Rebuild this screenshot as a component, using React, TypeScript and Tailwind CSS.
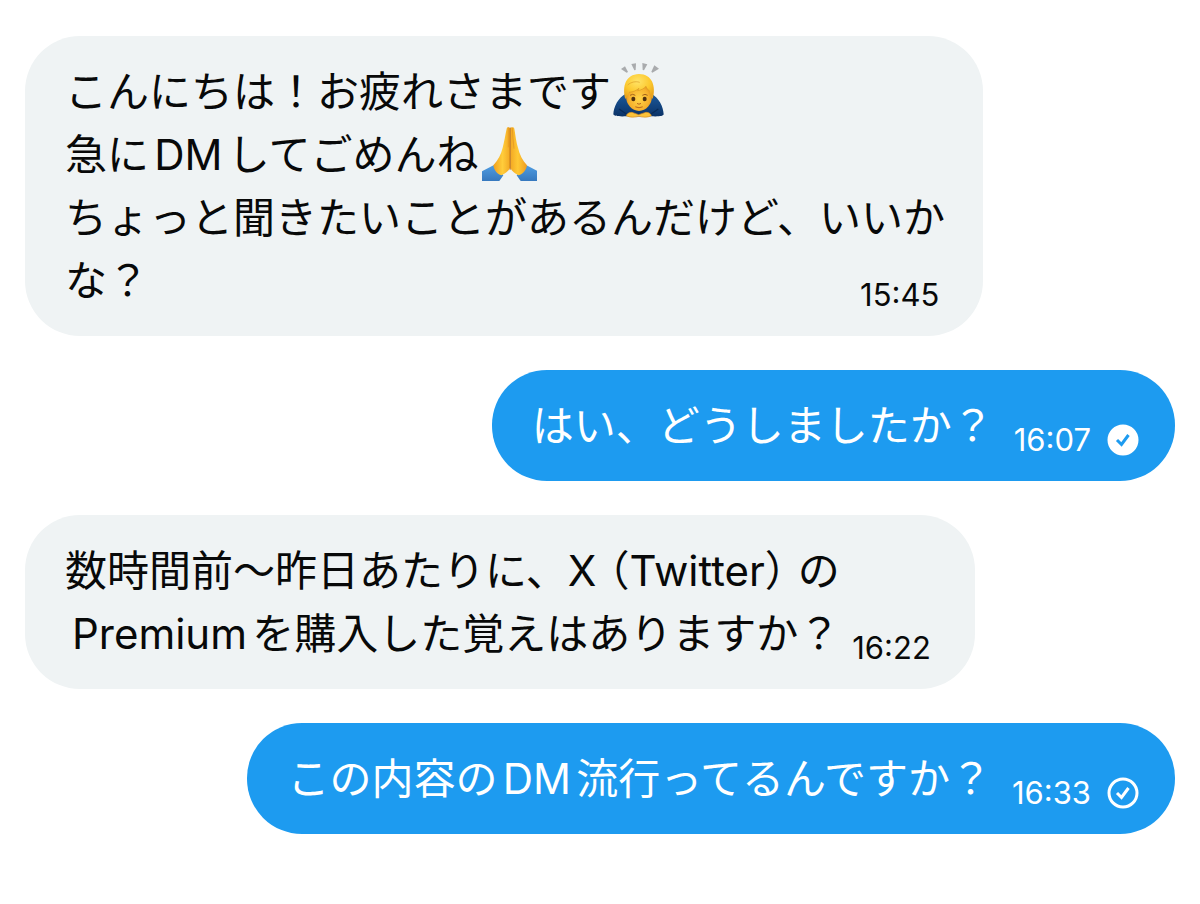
import type { ReactNode } from "react";

type TMessage = {
  id: number;
  sent: boolean;
  time: string;
  status?: "read" | "delivered";
  body: ReactNode;
};

function BowEmoji() {
  return (
    <svg
      role="img"
      aria-label="土下座"
      viewBox="36 26 168 168"
      className="mx-0.5 inline-block size-14 align-[-12px]"
    >
      <defs>
        <radialGradient id="bow-face" cx="0.5" cy="0.6" r="0.55">
          <stop offset="0" stopColor="#ffd548" />
          <stop offset="0.7" stopColor="#f6b02c" />
          <stop offset="1" stopColor="#dd8c1d" />
        </radialGradient>
        <radialGradient id="bow-hair" cx="0.45" cy="0.3" r="0.7">
          <stop offset="0" stopColor="#ffe468" />
          <stop offset="0.6" stopColor="#fcc92f" />
          <stop offset="1" stopColor="#e9a41c" />
        </radialGradient>
        <linearGradient id="bow-body" x1="0" y1="0" x2="0" y2="1">
          <stop offset="0" stopColor="#1c5a9d" />
          <stop offset="1" stopColor="#0b3266" />
        </linearGradient>
      </defs>
      <g fill="#a9abad">
        <path d="M60 44l12-8 9 17-4 2z" />
        <path d="M91 29l14-2-1 20-4 1z" />
        <path d="M124 26l15 4-10 18-4-1z" />
        <path d="M160 33l14 10-20 12-3-3z" />
      </g>
      <path
        d="M74 118C52 130 38 156 37 180c2 6 18 7 40 6h72c24 1 38 0 39-6-1-24-14-48-36-62z"
        fill="url(#bow-body)"
      />
      <path
        d="M54 164l22 15M172 164l-22 15"
        stroke="#092b58"
        strokeWidth="4"
      />
      <ellipse cx="114" cy="125" rx="39" ry="45" fill="url(#bow-face)" />
      <path
        d="M73 134c-10-38 1-74 41-75 40 0 52 38 41 75-5-6-8-14-9-24-5-3-9-8-11-14-6 7-14 11-25 13l4-7c-8 7-18 11-30 12-2 8-6 15-11 20z"
        fill="url(#bow-hair)"
      />
      <path
        d="M84 114c12-1 22-5 30-12l-4 7c11-2 19-6 25-13 2 6 6 11 11 14M80 92c10-9 24-12 36-8"
        fill="none"
        stroke="#d99a24"
        strokeWidth="2"
      />
      <path
        d="M87 123q8-6 16 0M124 123q8-6 16 0"
        fill="none"
        stroke="#a5651c"
        strokeWidth="3"
      />
      <ellipse cx="97" cy="134" rx="6" ry="7" fill="#51310f" />
      <ellipse cx="131" cy="134" rx="6" ry="7" fill="#51310f" />
      <path
        d="M109 148q5 4 10 0M104 158q10 5 20 0"
        fill="none"
        stroke="#b8681c"
        strokeWidth="3"
        strokeLinecap="round"
      />
      <path
        d="M76 184c2-7 12-12 20-9l17 6 18-6c9-3 18 2 20 9-10 6-28 5-37 2-10 3-29 4-38-2z"
        fill="#fbc23a"
        stroke="#d78b20"
        strokeWidth="2"
      />
    </svg>
  );
}

function PrayEmoji() {
  return (
    <svg
      role="img"
      aria-label="お願い"
      viewBox="36 36 168 168"
      className="mx-0.5 inline-block size-14 align-[-12px]"
    >
      <defs>
        <linearGradient id="pray-left" x1="0" y1="0" x2="1" y2="0">
          <stop offset="0" stopColor="#f0a01f" />
          <stop offset="0.55" stopColor="#ffcd3b" />
          <stop offset="1" stopColor="#f3a823" />
        </linearGradient>
        <linearGradient id="pray-right" x1="1" y1="0" x2="0" y2="0">
          <stop offset="0" stopColor="#ee9b20" />
          <stop offset="0.55" stopColor="#ffc935" />
          <stop offset="1" stopColor="#f3a823" />
        </linearGradient>
        <linearGradient id="pray-sleeve" x1="0" y1="0" x2="0" y2="1">
          <stop offset="0" stopColor="#4f9de2" />
          <stop offset="1" stopColor="#3678be" />
        </linearGradient>
      </defs>
      <path d="M39 172l36-19 28 31-12 17H39z" fill="url(#pray-sleeve)" />
      <path d="M207 172l-36-19-28 31 12 17h52z" fill="url(#pray-sleeve)" />
      <path
        d="M123 43c-2-5-9-4-10 1-4 18-8 42-12 57-4 20-15 38-28 53 2 14 12 27 24 30 10-5 22-13 26-22z"
        fill="url(#pray-left)"
      />
      <path
        d="M124 43c2-5 11-4 12 1 3 18 6 42 11 57 4 20 14 38 27 53-2 14-13 27-25 30-10-5-21-13-25-22z"
        fill="url(#pray-right)"
      />
      <path
        d="M123.500 42v124"
        stroke="#b86b13"
        strokeWidth="3"
        strokeLinecap="round"
      />
      <path
        d="M118 40v60M130 42c1 20 2 40 5 62"
        fill="none"
        stroke="#e2921d"
        strokeWidth="2"
      />
    </svg>
  );
}

function StatusIcon({ status }: { status: "read" | "delivered" }) {
  const read = status === "read";
  return (
    <svg
      role="img"
      aria-label={read ? "既読" : "送信済み"}
      viewBox="0 0 32 32"
      className="size-8"
      fill="none"
    >
      <circle
        cx="16"
        cy="16"
        r="14"
        fill={read ? "#fff" : "none"}
        stroke="#fff"
        strokeWidth="3"
      />
      <path
        d="M10 16l4.500 4.500 7-9.500"
        stroke={read ? "#1d9bf0" : "#fff"}
        strokeWidth="3"
      />
    </svg>
  );
}

const messages: TMessage[] = [
  {
    id: 1,
    sent: false,
    time: "15:45",
    body: (
      <>
        こんにちは！お疲れさまです
        <BowEmoji />
        <br />
        急にDMしてごめんね
        <PrayEmoji />
        <br />
        ちょっと聞きたいことがあるんだけど、いいかな？
      </>
    ),
  },
  {
    id: 2,
    sent: true,
    time: "16:07",
    status: "read",
    body: "はい、どうしましたか？",
  },
  {
    id: 3,
    sent: false,
    time: "16:22",
    body: (
      <>
        数時間前〜昨日あたりに、X
        <span className="ml-3 [font-feature-settings:'halt']">（</span>
        Twitter
        <span className="mr-3 [font-feature-settings:'halt']">）</span>の
        <br />
        {"\u2006"}Premiumを購入した覚えはありますか？
      </>
    ),
  },
  {
    id: 4,
    sent: true,
    time: "16:33",
    status: "delivered",
    body: "この内容のDM流行ってるんですか？",
  },
];

function Bubble({ message }: { message: TMessage }) {
  const { sent, time, status, body } = message;
  return (
    <li
      className={`max-w-5/6 rounded-[55px] py-6 pr-9 pl-10 ${
        sent
          ? "self-end bg-[#1d9bf0] text-white"
          : "self-start bg-[#eff3f4] text-[#080909]"
      }`}
    >
      <p className="text-[42px] leading-[63px] [text-autospace:normal]">
        {body}
        <span
          className={`float-right flex h-[62px] items-end gap-4 text-[31px] leading-8 ${
            sent ? "pl-5" : "pr-2 pl-3"
          }`}
        >
          <time>{time}</time>
          {status && <StatusIcon status={status} />}
        </span>
      </p>
    </li>
  );
}

export default function App() {
  return (
    <main
      lang="ja"
      className="min-h-screen bg-white px-[25px] py-9 font-['Inter','Noto_Sans_CJK_JP',sans-serif]"
    >
      <ul className="flex flex-col gap-[34px]">
        {messages.map((m) => (
          <Bubble key={m.id} message={m} />
        ))}
      </ul>
    </main>
  );
}
